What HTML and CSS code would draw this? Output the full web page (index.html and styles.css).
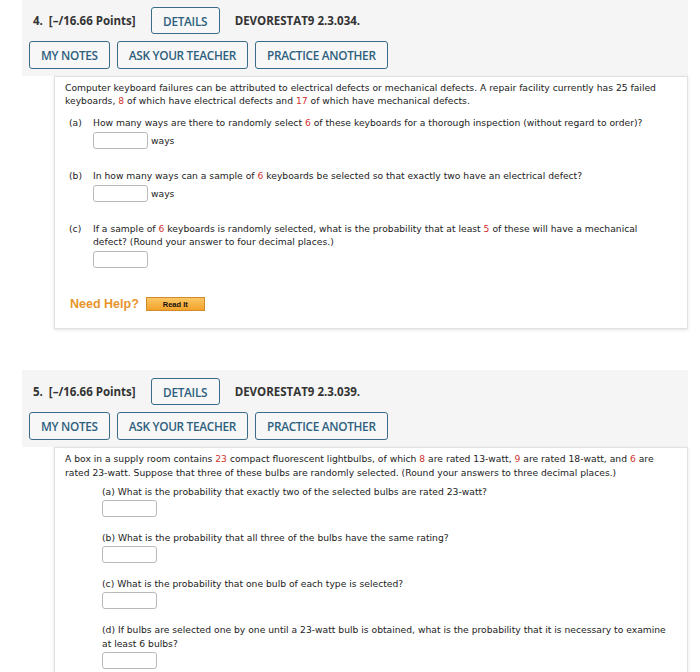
FILE: index.html
```html
<!DOCTYPE html>
<html lang="en">
<head>
<meta charset="utf-8">
<title>Questions</title>
<link rel="stylesheet" href="styles.css">
</head>
<body>
<main class="page">
  <section class="question q4">
    <header class="q-head">
      <div class="q-title-row">
        <span class="q-num">4.&nbsp; [–/16.66 Points]</span>
        <span class="btn btn-details">DETAILS</span>
        <span class="q-code">DEVORESTAT9 2.3.034.</span>
      </div>
      <div class="q-actions">
        <span class="btn">MY NOTES</span>
        <span class="btn">ASK YOUR TEACHER</span>
        <span class="btn">PRACTICE ANOTHER</span>
      </div>
    </header>
    <div class="q-body">
      <p class="stem">Computer keyboard failures can be attributed to electrical defects or mechanical defects. A repair facility currently has 25 failed keyboards, <span class="red">8</span> of which have electrical defects and <span class="red">17</span> of which have mechanical defects.</p>
      <div class="part">
        <span class="label">(a)</span>
        <div class="part-main">
          <p>How many ways are there to randomly select <span class="red">6</span> of these keyboards for a thorough inspection (without regard to order)?</p>
          <div class="answer"><span class="box"></span><span class="unit">ways</span></div>
        </div>
      </div>
      <div class="part">
        <span class="label">(b)</span>
        <div class="part-main">
          <p>In how many ways can a sample of <span class="red">6</span> keyboards be selected so that exactly two have an electrical defect?</p>
          <div class="answer"><span class="box"></span><span class="unit">ways</span></div>
        </div>
      </div>
      <div class="part">
        <span class="label">(c)</span>
        <div class="part-main">
          <p>If a sample of <span class="red">6</span> keyboards is randomly selected, what is the probability that at least <span class="red">5</span> of these will have a mechanical defect? (Round your answer to four decimal places.)</p>
          <div class="answer"><span class="box"></span></div>
        </div>
      </div>
      <div class="help">
        <span class="need">Need Help?</span>
        <span class="read-it">Read It</span>
      </div>
    </div>
  </section>

  <section class="question q5">
    <header class="q-head">
      <div class="q-title-row">
        <span class="q-num">5.&nbsp; [–/16.66 Points]</span>
        <span class="btn btn-details">DETAILS</span>
        <span class="q-code">DEVORESTAT9 2.3.039.</span>
      </div>
      <div class="q-actions">
        <span class="btn">MY NOTES</span>
        <span class="btn">ASK YOUR TEACHER</span>
        <span class="btn">PRACTICE ANOTHER</span>
      </div>
    </header>
    <div class="q-body body5">
      <p class="stem stem5">A box in a supply room contains <span class="red">23</span> compact fluorescent lightbulbs, of which <span class="red">8</span> are rated 13-watt, <span class="red">9</span> are rated 18-watt, and <span class="red">6</span> are rated 23-watt. Suppose that three of these bulbs are randomly selected. (Round your answers to three decimal places.)</p>
      <div class="sub">
        <p>(a) What is the probability that exactly two of the selected bulbs are rated 23-watt?</p>
        <span class="box"></span>
      </div>
      <div class="sub">
        <p>(b) What is the probability that all three of the bulbs have the same rating?</p>
        <span class="box"></span>
      </div>
      <div class="sub">
        <p>(c) What is the probability that one bulb of each type is selected?</p>
        <span class="box"></span>
      </div>
      <div class="sub">
        <p>(d) If bulbs are selected one by one until a 23-watt bulb is obtained, what is the probability that it is necessary to examine at least 6 bulbs?</p>
        <span class="box"></span>
      </div>
    </div>
  </section>
</main>
</body>
</html>
```
FILE: styles.css
```css
html, body {
  margin: 0;
  padding: 0;
  background: #ffffff;
}
.page {
  padding: 0 12px 0 22px;
  margin-top: -1px;
}
.question {
  width: 666px;
}
.q5 {
  margin-top: 41px;
}
.q-head {
  background: #f5f5f5;
  padding: 8px 7px 7px 7px;
  display: flex;
  flex-direction: column;
  gap: 7px;
  font-family: "Open Sans", sans-serif;
  color: #333333;
}
.q-title-row {
  display: flex;
  align-items: center;
  padding-left: 4px;
}
.q-num, .q-code {
  font-size: 11.5px;
  font-weight: 700;
  color: #333333;
}
.q-actions {
  display: flex;
  gap: 7px;
}
.btn {
  display: inline-flex;
  align-items: center;
  justify-content: center;
  box-sizing: border-box;
  height: 28px;
  padding: 0 11px;
  border: 1.5px solid #3a6c8a;
  border-radius: 3px;
  font-family: "Open Sans", sans-serif;
  font-size: 11.8px;
  font-weight: 600;
  letter-spacing: -0.3px;
  color: #2e5f7e;
  background: #f7f7f7;
}
.btn-details {
  height: 27px;
  width: 69px;
  padding: 0;
  margin: 0 15px 0 15px;
}
.q-body {
  margin-left: 32px;
  background: #ffffff;
  border: 1px solid #e2e2e2;
  box-shadow: 0 1px 3px rgba(0, 0, 0, 0.12);
  padding: 4px 6px 17px 10px;
  font-family: "DejaVu Sans", Verdana, sans-serif;
  font-size: 9.2px;
  line-height: 13px;
  color: #222222;
}
.q-body p {
  margin: 0;
}
.red {
  color: #d0312d;
}
.part {
  display: flex;
  margin-top: 9px;
  padding-left: 4px;
  padding-right: 10px;
}
.part + .part {
  margin-top: 20px;
}
.label {
  width: 24px;
  flex: none;
}
.part-main {
  flex: 1;
}
.answer {
  display: flex;
  align-items: flex-start;
  margin-top: 3px;
}
.box {
  display: block;
  box-sizing: border-box;
  width: 55px;
  height: 17px;
  border: 1px solid #b9b9b9;
  border-radius: 3px;
  background: #ffffff;
}
.unit {
  margin-left: 3px;
  margin-top: 2px;
}
.help {
  display: flex;
  align-items: center;
  margin-top: 29px;
  padding-left: 5px;
}
.need {
  font-family: "Liberation Sans", Arial, sans-serif;
  font-weight: 700;
  font-size: 12.5px;
  color: #e8942c;
}
.read-it {
  display: inline-flex;
  align-items: center;
  justify-content: center;
  box-sizing: border-box;
  margin-left: 7px;
  width: 59px;
  height: 14px;
  border: 1px solid #d08a2c;
  background: linear-gradient(#fbc765, #f3a22a);
  font-family: "Liberation Sans", Arial, sans-serif;
  font-weight: 700;
  font-size: 7.5px;
  color: #111111;
}
.body5 {
  line-height: 14px;
  padding-bottom: 4px;
}
.stem5 {
  padding-right: 6px;
}
.sub {
  padding-left: 37px;
  padding-right: 8px;
  margin-top: 5px;
}
.sub + .sub {
  margin-top: 14px;
}
.sub .box {
  margin-top: 1px;
}
```
